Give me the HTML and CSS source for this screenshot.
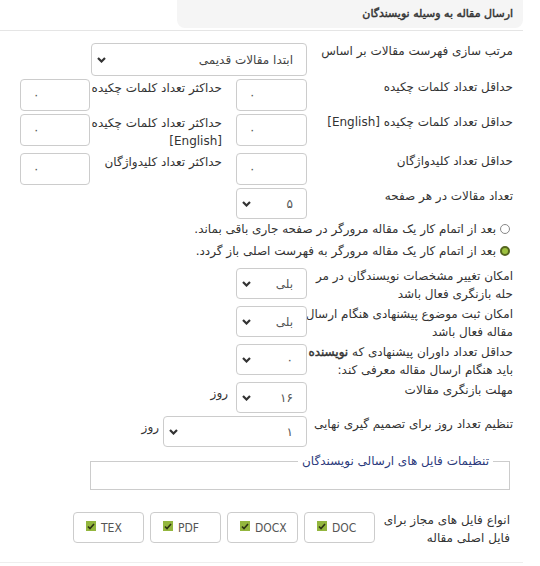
FILE: index.html
```html
<!DOCTYPE html>
<html lang="fa" dir="rtl">
<head>
<meta charset="utf-8">
<title>ارسال مقاله به وسیله نویسندگان</title>
<link rel="stylesheet" href="styles.css">
</head>
<body>
<div class="page">
  <div class="head"><div class="head-box">ارسال مقاله به وسیله نویسندگان</div></div>
  <div class="form">
    <div class="row">
      <div class="lbl">مرتب سازی فهرست مقالات بر اساس</div>
      <div class="sel w-wide"><span class="val">ابتدا مقالات قدیمی</span><svg class="chev" width="9" height="6" viewBox="0 0 9 6"><path d="M1 1 L4.5 4.5 L8 1" fill="none" stroke="#333" stroke-width="2.2"/></svg></div>
    </div>
    <div class="row">
      <div class="lbl">حداقل تعداد کلمات چکیده</div>
      <input class="inp" type="text" value="۰">
      <div class="lbl2">حداکثر تعداد کلمات چکیده</div>
      <input class="inp inp-s" type="text" value="۰">
    </div>
    <div class="row">
      <div class="lbl">حداقل تعداد کلمات چکیده [English]</div>
      <input class="inp" type="text" value="۰">
      <div class="lbl2">حداکثر تعداد کلمات چکیده<br>[English]</div>
      <input class="inp inp-s" type="text" value="۰">
    </div>
    <div class="row">
      <div class="lbl">حداقل تعداد کلیدواژگان</div>
      <input class="inp" type="text" value="۰">
      <div class="lbl2">حداکثر تعداد کلیدواژگان</div>
      <input class="inp inp-s" type="text" value="۰">
    </div>
    <div class="row">
      <div class="lbl">تعداد مقالات در هر صفحه</div>
      <div class="sel"><span class="val">۵</span><svg class="chev" width="9" height="6" viewBox="0 0 9 6"><path d="M1 1 L4.5 4.5 L8 1" fill="none" stroke="#333" stroke-width="2.2"/></svg></div>
    </div>
    <div class="radios">
      <div class="radio-row"><span class="radio"></span><span>بعد از اتمام کار یک مقاله مرورگر در صفحه جاری باقی بماند.</span></div>
      <div class="radio-row"><span class="radio on"></span><span>بعد از اتمام کار یک مقاله مرورگر به فهرست اصلی باز گردد.</span></div>
    </div>
    <div class="row">
      <div class="lbl">امکان تغییر مشخصات نویسندگان در مر<br>حله بازنگری فعال باشد</div>
      <div class="sel"><span class="val">بلی</span><svg class="chev" width="9" height="6" viewBox="0 0 9 6"><path d="M1 1 L4.5 4.5 L8 1" fill="none" stroke="#333" stroke-width="2.2"/></svg></div>
    </div>
    <div class="row">
      <div class="lbl">امکان ثبت موضوع پیشنهادی هنگام ارسال<br>مقاله فعال باشد</div>
      <div class="sel"><span class="val">بلی</span><svg class="chev" width="9" height="6" viewBox="0 0 9 6"><path d="M1 1 L4.5 4.5 L8 1" fill="none" stroke="#333" stroke-width="2.2"/></svg></div>
    </div>
    <div class="row">
      <div class="lbl">حداقل تعداد داوران پیشنهادی که <b class="strong">نویسنده</b><br>باید هنگام ارسال مقاله معرفی کند:</div>
      <div class="sel"><span class="val">۰</span><svg class="chev" width="9" height="6" viewBox="0 0 9 6"><path d="M1 1 L4.5 4.5 L8 1" fill="none" stroke="#333" stroke-width="2.2"/></svg></div>
    </div>
    <div class="row">
      <div class="lbl">مهلت بازنگری مقالات</div>
      <div class="sel"><span class="val">۱۶</span><svg class="chev" width="9" height="6" viewBox="0 0 9 6"><path d="M1 1 L4.5 4.5 L8 1" fill="none" stroke="#333" stroke-width="2.2"/></svg></div>
      <div class="unit">روز</div>
    </div>
    <div class="row">
      <div class="lbl">تنظیم تعداد روز برای تصمیم گیری نهایی</div>
      <div class="sel w-mid"><span class="val">۱</span><svg class="chev" width="9" height="6" viewBox="0 0 9 6"><path d="M1 1 L4.5 4.5 L8 1" fill="none" stroke="#333" stroke-width="2.2"/></svg></div>
      <div class="unit unit-s">روز</div>
    </div>
    <fieldset class="fs">
      <legend>تنظیمات فایل های ارسالی نویسندگان</legend>
      <div class="fs-body"></div>
    </fieldset>
    <div class="files">
      <div class="lbl3">انواع فایل های مجاز برای<br>فایل اصلی مقاله</div>
      <div class="btns">
        <div class="fbtn"><span class="chk"><svg width="8" height="7" viewBox="0 0 8 7"><path d="M1 3.5 L3 5.5 L7 1" fill="none" stroke="#2d3314" stroke-width="1.6"/></svg></span>DOC</div>
        <div class="fbtn"><span class="chk"><svg width="8" height="7" viewBox="0 0 8 7"><path d="M1 3.5 L3 5.5 L7 1" fill="none" stroke="#2d3314" stroke-width="1.6"/></svg></span>DOCX</div>
        <div class="fbtn"><span class="chk"><svg width="8" height="7" viewBox="0 0 8 7"><path d="M1 3.5 L3 5.5 L7 1" fill="none" stroke="#2d3314" stroke-width="1.6"/></svg></span>PDF</div>
        <div class="fbtn"><span class="chk"><svg width="8" height="7" viewBox="0 0 8 7"><path d="M1 3.5 L3 5.5 L7 1" fill="none" stroke="#2d3314" stroke-width="1.6"/></svg></span>TEX</div>
      </div>
    </div>
  </div>
</div>
</body>
</html>
```

FILE: styles.css
```css
html, body {
  margin: 0;
  padding: 0;
  background: #fff;
}
body {
  font-family: Tahoma, "DejaVu Sans", sans-serif;
  font-size: 12px;
  color: #333;
}
.page {
  width: 523px;
  margin-right: auto;
  margin-left: 0;
  direction: rtl;
  border-bottom: 1px solid #eee;
  padding-bottom: 15px;
}
.head {
  height: 30px;
  border-bottom: 1px solid #e5e5e5;
  display: flex;
}
.head-box {
  width: 336px;
  height: 28px;
  padding-right: 10px;
  background: #f5f5f5;
  border-radius: 0 0 8px 8px;
  font-size: 11px;
  line-height: 28px;
  color: #333;
  -webkit-text-stroke: 0.45px #333;
}
.strong {
  font-weight: normal;
  -webkit-text-stroke: 0.45px #333;
}
.form {
  padding: 12px 10px 0 0;
}
.row {
  display: flex;
  align-items: flex-start;
  margin-bottom: 3px;
}
.lbl {
  width: 200px;
  flex: none;
  line-height: 17.5px;
  white-space: nowrap;
  margin-left: 6px;
}
.lbl2 {
  width: 130px;
  flex: none;
  line-height: 18px;
  white-space: nowrap;
  margin-right: 14px;
  margin-left: 2px;
}
.inp {
  box-sizing: border-box;
  width: 71px;
  height: 32px;
  border: 1px solid #ccc;
  border-radius: 4px;
  padding: 0 12px;
  margin: 0;
  direction: ltr;
  text-align: left;
  font-family: Tahoma, "DejaVu Sans", sans-serif;
  font-size: 12px;
  color: #555;
  background: #fff;
  flex: none;
}
.inp-s {
  width: 70px;
}
.sel {
  box-sizing: border-box;
  width: 71px;
  height: 31px;
  border: 1px solid #ccc;
  border-radius: 4px;
  display: flex;
  align-items: center;
  justify-content: space-between;
  padding: 0 13px 0 5px;
  color: #555;
  flex: none;
}
.w-wide {
  width: 216px;
  height: 33px;
  color: #444;
}
.w-mid {
  width: 144px;
}
.chev {
  flex: none;
}
.unit {
  margin-right: 8px;
  line-height: 18px;
  padding-top: 2px;
}
.unit-s {
  margin-right: 4px;
}
.radios {
  margin-top: -4px;
  margin-bottom: 6px;
}
.radio-row {
  display: flex;
  align-items: center;
  height: 22px;
  padding-right: 3px;
}
.radio {
  box-sizing: border-box;
  width: 10px;
  height: 10px;
  border: 1px solid #888;
  border-radius: 50%;
  margin-left: 4px;
  background: #fff;
  flex: none;
}
.radio.on {
  border: 2px solid #55661e;
  background: #9dc13f;
}
.fs {
  width: 420px;
  box-sizing: border-box;
  margin: 4px 3px 0 0;
  padding: 0;
  border: 1px solid #ccc;
}
.fs legend {
  margin-right: 16px;
  padding: 0 4px;
  font-size: 12px;
  line-height: 20px;
  color: #2c3a7c;
}
.fs-body {
  height: 18px;
}
.files {
  display: flex;
  align-items: flex-start;
  margin-top: 21px;
  padding-right: 3px;
}
.lbl3 {
  width: 129px;
  flex: none;
  line-height: 18px;
  white-space: nowrap;
  margin-left: 6px;
}
.btns {
  display: flex;
  gap: 6px;
  margin-top: 1px;
}
.fbtn {
  box-sizing: border-box;
  width: 71px;
  height: 31px;
  border: 1px solid #ccc;
  border-radius: 4px;
  direction: ltr;
  display: flex;
  align-items: center;
  padding-left: 12px;
  font-family: "DejaVu Sans Condensed", "DejaVu Sans", sans-serif;
  font-size: 12px;
  color: #555;
}
.chk {
  width: 10px;
  height: 10px;
  background: #93b63e;
  display: flex;
  align-items: center;
  justify-content: center;
  margin-right: 5px;
  margin-top: -3px;
}
```
